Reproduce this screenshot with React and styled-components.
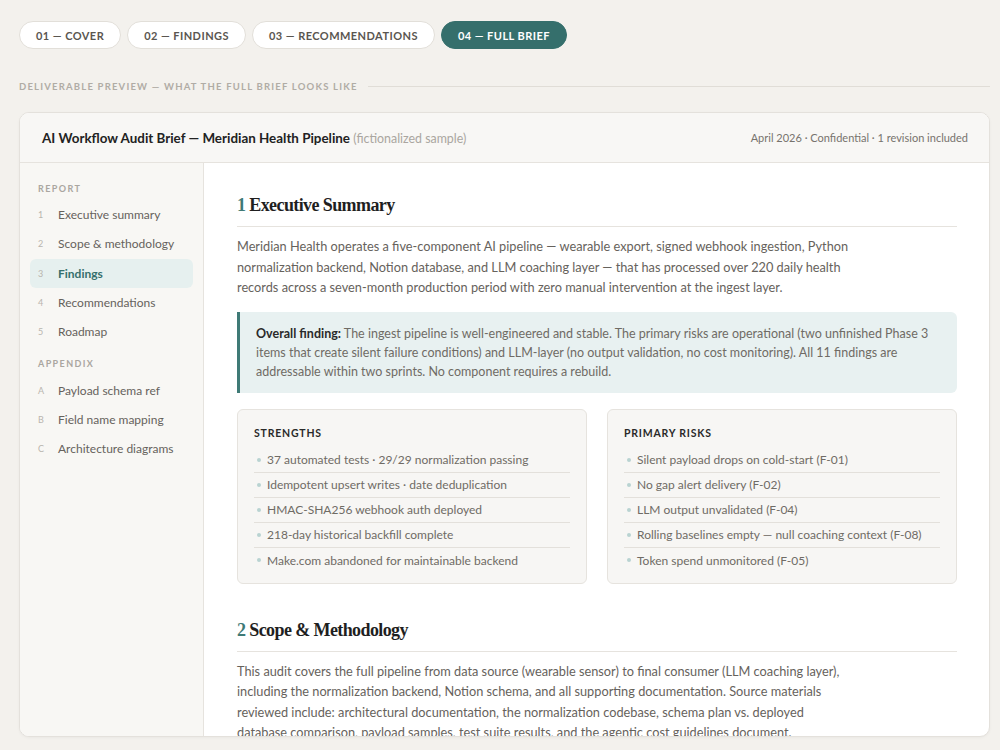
import React from "react";
import styled, { createGlobalStyle } from "styled-components";

const GlobalStyle = createGlobalStyle`
  html, body {
    margin: 0;
    padding: 0;
    background: #f3f1ed;
  }
  body {
    font-family: Lato, "Liberation Sans", sans-serif;
    color: #2b2b2b;
  }
  * {
    box-sizing: border-box;
  }
`;

const Page = styled.div`
  padding: 21px 10px 13px 19px;
  height: 750px;
  display: flex;
  flex-direction: column;
`;

const Tabs = styled.div`
  display: flex;
  gap: 6px;
`;

const Tab = styled.div`
  height: 28px;
  padding: 0 16px;
  border-radius: 14px;
  display: flex;
  align-items: center;
  font-size: 11px;
  font-weight: 700;
  letter-spacing: 0.45px;
  border: 1px solid ${(p) => (p.active ? "#356f6c" : "#e2dfd9")};
  background: ${(p) => (p.active ? "#356f6c" : "#ffffff")};
  color: ${(p) => (p.active ? "#ffffff" : "#5a5650")};
`;

const PreviewLabel = styled.div`
  margin-top: 32px;
  display: flex;
  align-items: center;
  gap: 10px;
  font-size: 9.5px;
  font-weight: 700;
  letter-spacing: 1.2px;
  color: #b0aca5;
  &::after {
    content: "";
    flex: 1;
    height: 1px;
    background: #e0ddd7;
  }
`;

const Card = styled.div`
  margin-top: 20px;
  flex: 1;
  min-height: 0;
  background: #fff;
  border: 1px solid #e4e1dc;
  border-radius: 10px;
  overflow: hidden;
  display: flex;
  flex-direction: column;
  box-shadow: 0 1px 3px rgba(0, 0, 0, 0.04);
`;

const CardHeader = styled.div`
  height: 50px;
  flex-shrink: 0;
  padding: 0 21px 0 22px;
  display: flex;
  align-items: center;
  justify-content: space-between;
  background: #f8f7f5;
  border-bottom: 1px solid #e6e3de;
`;

const BriefTitle = styled.div`
  font-size: 13.4px;
  font-weight: 700;
  color: #222;
  span {
    font-weight: 400;
    color: #aaa6a0;
    font-size: 12.4px;
  }
`;

const Meta = styled.div`
  font-size: 11px;
  color: #77736d;
`;

const Body = styled.div`
  flex: 1;
  min-height: 0;
  display: flex;
`;

const Sidebar = styled.div`
  width: 184px;
  flex-shrink: 0;
  background: #f8f7f4;
  border-right: 1px solid #e6e3de;
  padding: 20px 10px 0 10px;
`;

const NavGroup = styled.div`
  font-size: 9px;
  font-weight: 700;
  letter-spacing: 1.4px;
  color: #aaa6a0;
  padding: 0 8px;
  margin: ${(p) => (p.first ? "0 0 5px" : "12px 0 5px")};
  height: 12px;
  line-height: 12px;
`;

const NavItem = styled.div`
  display: flex;
  align-items: center;
  height: 29.3px;
  padding: 0 8px;
  border-radius: 6px;
  font-size: 12px;
  background: ${(p) => (p.active ? "#e6f0ef" : "transparent")};
  color: ${(p) => (p.active ? "#356f6c" : "#66625c")};
  font-weight: ${(p) => (p.active ? 700 : 400)};
`;

const NavKey = styled.span`
  width: 20px;
  font-size: 9px;
  font-weight: 400;
  color: #b9b5ae;
`;

const Main = styled.div`
  flex: 1;
  min-width: 0;
  padding: 32px 32px 0 33px;
  overflow: hidden;
`;

const SectionTitle = styled.h2`
  margin: 0 0 9px;
  padding-bottom: 10px;
  border-bottom: 1px solid #e6e3de;
  font-family: "Liberation Serif", "DejaVu Serif", serif;
  font-size: 18px;
  font-weight: 700;
  letter-spacing: -0.6px;
  color: #1f1f1f;
  span {
    color: #3f7a76;
  }
`;

const Para = styled.p`
  margin: 0;
  max-width: ${(p) => p.width}px;
  font-size: 12.75px;
  line-height: 20.5px;
  color: #66625c;
`;

const Callout = styled.div`
  margin: 14px 0 16px;
  padding: 12px 16px 12px 16px;
  background: #e8f1f1;
  border-left: 3px solid #3f7a76;
  border-radius: 0 6px 6px 0;
  font-size: 12.5px;
  line-height: 19px;
  color: #6f6b65;
  b {
    color: #2a2a2a;
  }
`;

const Columns = styled.div`
  display: grid;
  grid-template-columns: 1fr 1fr;
  gap: 20px;
  margin-bottom: 36px;
`;

const Panel = styled.div`
  background: #f7f6f4;
  border: 1px solid #e6e3de;
  border-radius: 6px;
  padding: 17px 16px 10px 16px;
`;

const PanelTitle = styled.div`
  font-size: 10.5px;
  font-weight: 700;
  letter-spacing: 0.8px;
  color: #2a2a2a;
  margin-bottom: 9px;
`;

const List = styled.ul`
  list-style: none;
  margin: 0;
  padding: 0;
`;

const ListItem = styled.li`
  display: flex;
  align-items: center;
  gap: 6px;
  height: 25px;
  font-size: 12px;
  color: #6f6b65;
  border-bottom: 1px solid #e3e0db;
  &:last-child {
    border-bottom: none;
  }
  &::before {
    content: "";
    width: 4px;
    height: 4px;
    border-radius: 50%;
    background: #b9d3d1;
    margin-left: 3px;
  }
`;

const strengths = [
  "37 automated tests · 29/29 normalization passing",
  "Idempotent upsert writes · date deduplication",
  "HMAC-SHA256 webhook auth deployed",
  "218-day historical backfill complete",
  "Make.com abandoned for maintainable backend",
];

const risks = [
  "Silent payload drops on cold-start (F-01)",
  "No gap alert delivery (F-02)",
  "LLM output unvalidated (F-04)",
  "Rolling baselines empty — null coaching context (F-08)",
  "Token spend unmonitored (F-05)",
];

const report = [
  ["1", "Executive summary"],
  ["2", "Scope & methodology"],
  ["3", "Findings"],
  ["4", "Recommendations"],
  ["5", "Roadmap"],
];

const appendix = [
  ["A", "Payload schema ref"],
  ["B", "Field name mapping"],
  ["C", "Architecture diagrams"],
];

export default function App() {
  return (
    <>
      <GlobalStyle />
      <Page>
        <Tabs>
          <Tab>01 — COVER</Tab>
          <Tab>02 — FINDINGS</Tab>
          <Tab>03 — RECOMMENDATIONS</Tab>
          <Tab active>04 — FULL BRIEF</Tab>
        </Tabs>
        <PreviewLabel>DELIVERABLE PREVIEW — WHAT THE FULL BRIEF LOOKS LIKE</PreviewLabel>
        <Card>
          <CardHeader>
            <BriefTitle>
              AI Workflow Audit Brief — Meridian Health Pipeline <span>(fictionalized sample)</span>
            </BriefTitle>
            <Meta>April 2026 · Confidential · 1 revision included</Meta>
          </CardHeader>
          <Body>
            <Sidebar>
              <NavGroup first>REPORT</NavGroup>
              {report.map(([k, label]) => (
                <NavItem key={k} active={k === "3"}>
                  <NavKey>{k}</NavKey>
                  {label}
                </NavItem>
              ))}
              <NavGroup>APPENDIX</NavGroup>
              {appendix.map(([k, label]) => (
                <NavItem key={k}>
                  <NavKey>{k}</NavKey>
                  {label}
                </NavItem>
              ))}
            </Sidebar>
            <Main>
              <SectionTitle>
                <span>1</span> Executive Summary
              </SectionTitle>
              <Para width={630}>
                Meridian Health operates a five-component AI pipeline — wearable export, signed webhook
                ingestion, Python normalization backend, Notion database, and LLM coaching layer — that
                has processed over 220 daily health records across a seven-month production period with
                zero manual intervention at the ingest layer.
              </Para>
              <Callout>
                <b>Overall finding:</b> The ingest pipeline is well-engineered and stable. The primary
                risks are operational (two unfinished Phase 3 items that create silent failure
                conditions) and LLM-layer (no output validation, no cost monitoring). All 11 findings are
                addressable within two sprints. No component requires a rebuild.
              </Callout>
              <Columns>
                <Panel>
                  <PanelTitle>STRENGTHS</PanelTitle>
                  <List>
                    {strengths.map((s) => (
                      <ListItem key={s}>{s}</ListItem>
                    ))}
                  </List>
                </Panel>
                <Panel>
                  <PanelTitle>PRIMARY RISKS</PanelTitle>
                  <List>
                    {risks.map((s) => (
                      <ListItem key={s}>{s}</ListItem>
                    ))}
                  </List>
                </Panel>
              </Columns>
              <SectionTitle>
                <span>2</span> Scope &amp; Methodology
              </SectionTitle>
              <Para width={614}>
                This audit covers the full pipeline from data source (wearable sensor) to final consumer
                (LLM coaching layer), including the normalization backend, Notion schema, and all
                supporting documentation. Source materials reviewed include: architectural documentation,
                the normalization codebase, schema plan vs. deployed database comparison, payload
                samples, test suite results, and the agentic cost guidelines document.
              </Para>
            </Main>
          </Body>
        </Card>
      </Page>
    </>
  );
}
